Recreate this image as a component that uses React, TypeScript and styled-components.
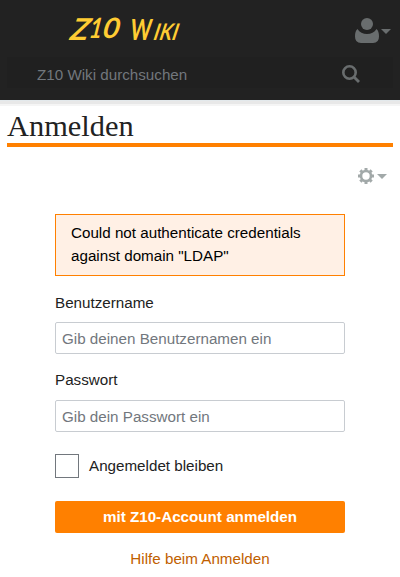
import React from "react";
import styled, { createGlobalStyle } from "styled-components";

const GlobalStyle = createGlobalStyle`
  body {
    margin: 0;
    background: #fff;
    color: #222;
    font: 15.2px/23px "Liberation Sans", Arial, sans-serif;
  }
  *, *::before, *::after { box-sizing: border-box; }
`;

const Page = styled.div`
  height: 577px;
  overflow: hidden;
`;

const Header = styled.header`
  height: 106px;
  background: #222;
  border-bottom: 2px solid #f5f5f5;
  box-shadow: inset 0 -3px #e8e8e8, inset 0 -4px #e3e9ec;
`;

const HeaderTop = styled.div`
  display: flex;
  justify-content: space-between;
  height: 57px;
  padding: 0 9px 0 60px;
`;

const UserMenu = styled.button`
  display: flex;
  align-items: flex-start;
  gap: 2px;
  padding: 17px 0 0;
  border: 0;
  background: none;
`;

const Caret = styled.span<{ $color: string; $drop: number }>`
  width: 0;
  margin-top: ${(p) => p.$drop}px;
  border: 5px solid transparent;
  border-top-color: ${(p) => p.$color};
  border-bottom: 0;
`;

const SearchBar = styled.form`
  display: flex;
  align-items: center;
  justify-content: space-between;
  height: 31px;
  margin: 0 7px;
  padding: 0 33px 0 30px;
  background: #202020;
`;

const SearchInput = styled.input`
  width: 260px;
  height: 31px;
  padding: 4px 0 0;
  border: 0;
  outline: 0;
  background: transparent;
  font: inherit;
  color: #72777d;
  &::placeholder { color: #72777d; opacity: 1; }
`;

const IconButton = styled.button`
  display: flex;
  padding: 2px 0 0;
  border: 0;
  background: none;
`;

const Title = styled.h1`
  height: 41px;
  margin: 0 7px;
  padding-top: 2px;
  border-bottom: 4px solid #ff8000;
  font: 30.4px/37px "Liberation Serif", "Times New Roman", serif;
  color: #222;
`;

const PageTools = styled.div`
  display: flex;
  justify-content: flex-end;
  gap: 3px;
  height: 67px;
  padding: 21px 13px 0 0;
`;

const LoginForm = styled.form`
  display: flex;
  flex-direction: column;
  width: 290px;
  margin: 0 auto;
`;

const ErrorBox = styled.div`
  height: 62px;
  margin-bottom: 15px;
  padding: 6px 15px;
  border: 1px solid #ff8000;
  background: #fff0e5;
  color: #000;
`;

const Field = styled.label`
  display: flex;
  flex-direction: column;
  gap: 8px;
  line-height: 23px;
  & + & { margin-top: 14px; gap: 9px; }
`;

const TextInput = styled.input`
  width: 100%;
  height: 32px;
  padding: 0 6px;
  border: 1px solid #c8ccd1;
  border-radius: 2px;
  outline: 0;
  background: #fff;
  font: inherit;
  &::placeholder { color: #72777d; opacity: 1; }
`;

const Remember = styled.label`
  display: flex;
  align-items: center;
  gap: 10px;
  height: 24px;
  margin: 22px 0 23px;
  line-height: 23px;
`;

const RememberText = styled.span`
  padding-bottom: 1px;
`;

const Checkbox = styled.input`
  appearance: none;
  width: 24px;
  height: 24px;
  margin: 0;
  border: 1px solid #72777d;
  background: #fff;
`;

const Submit = styled.button`
  height: 32px;
  padding: 0;
  border: 0;
  border-radius: 2px;
  background: #ff8000;
  color: #fff;
  font: bold 15.2px/32px "Liberation Sans", Arial, sans-serif;
`;

const HelpLink = styled.a`
  margin-top: 14px;
  text-align: center;
  color: #bf6000;
  text-decoration: none;
`;

const LogoText = styled.text`
  font-family: Lato, sans-serif;
  font-weight: 700;
  fill: #ffcc33;
`;

const letters = [
  { c: "Z", x: 8, y: 40, size: 30, sx: 1, skew: -20 },
  { c: "1", x: 28, y: 38, size: 28, sx: 0.75, skew: -14 },
  { c: "0", x: 41, y: 38, size: 28, sx: 1, skew: -16 },
  { c: "W", x: 69, y: 39.5, size: 29, sx: 0.7, skew: -8 },
  { c: "I", x: 92, y: 39.5, size: 23, sx: 0.8, skew: -18 },
  { c: "K", x: 98, y: 39.5, size: 23, sx: 0.78, skew: -18 },
  { c: "I", x: 110.5, y: 39.5, size: 23, sx: 0.8, skew: -18 },
];

const Logo = () => (
  <svg width="130" height="50" aria-label="Z10 Wiki">
    {letters.map((l, i) => (
      <LogoText
        key={i}
        fontSize={l.size}
        transform={`translate(${l.x} ${l.y}) skewX(${l.skew}) scale(${l.sx} 1)`}
      >
        {l.c}
      </LogoText>
    ))}
  </svg>
);

const UserIcon = () => (
  <svg width="24" height="26" viewBox="0 0 24 26" fill="#696d6e">
    <circle cx="12" cy="7" r="6" />
    <path d="M2.500 12C.7 13.500 0 16 0 19.500Q0 26 6 26h12q6 0 6-6.500c0-3.500-.7-6-2.500-7.500C19.500 15.500 16 17 12 17s-7.500-1.500-9.500-5z" />
  </svg>
);

const SearchIcon = () => (
  <svg width="18" height="18" viewBox="0 0 18 18" fill="none" stroke="#696d6e">
    <circle cx="7.500" cy="7.500" r="6.200" strokeWidth="2.600" />
    <path d="M12 12L17 17" strokeWidth="2.800" />
  </svg>
);

const GearIcon = () => (
  <svg width="16" height="16" viewBox="0 0 16 16" fill="none" stroke="#a2a9a9">
    <circle cx="8" cy="8" r="5" strokeWidth="2.600" />
    {[0, 45, 90, 135, 180, 225, 270, 315].map((a) => (
      <path key={a} d="M8 0v3" strokeWidth="3" transform={`rotate(${a} 8 8)`} />
    ))}
  </svg>
);

export default function App() {
  return (
    <Page>
      <GlobalStyle />
      <Header>
        <HeaderTop>
          <Logo />
          <UserMenu type="button" aria-label="Benutzer">
            <UserIcon />
            <Caret $color="#696d6e" $drop={12} />
          </UserMenu>
        </HeaderTop>
        <SearchBar>
          <SearchInput placeholder="Z10 Wiki durchsuchen" />
          <IconButton type="button" aria-label="Suchen">
            <SearchIcon />
          </IconButton>
        </SearchBar>
      </Header>
      <Title>Anmelden</Title>
      <PageTools>
        <GearIcon />
        <Caret $color="#a2a9a9" $drop={6} />
      </PageTools>
      <LoginForm>
        <ErrorBox>Could not authenticate credentials against domain "LDAP"</ErrorBox>
        <Field>
          Benutzername
          <TextInput placeholder="Gib deinen Benutzernamen ein" />
        </Field>
        <Field>
          Passwort
          <TextInput type="password" placeholder="Gib dein Passwort ein" />
        </Field>
        <Remember>
          <Checkbox type="checkbox" />
          <RememberText>Angemeldet bleiben</RememberText>
        </Remember>
        <Submit type="button">mit Z10-Account anmelden</Submit>
        <HelpLink>Hilfe beim Anmelden</HelpLink>
      </LoginForm>
    </Page>
  );
}
